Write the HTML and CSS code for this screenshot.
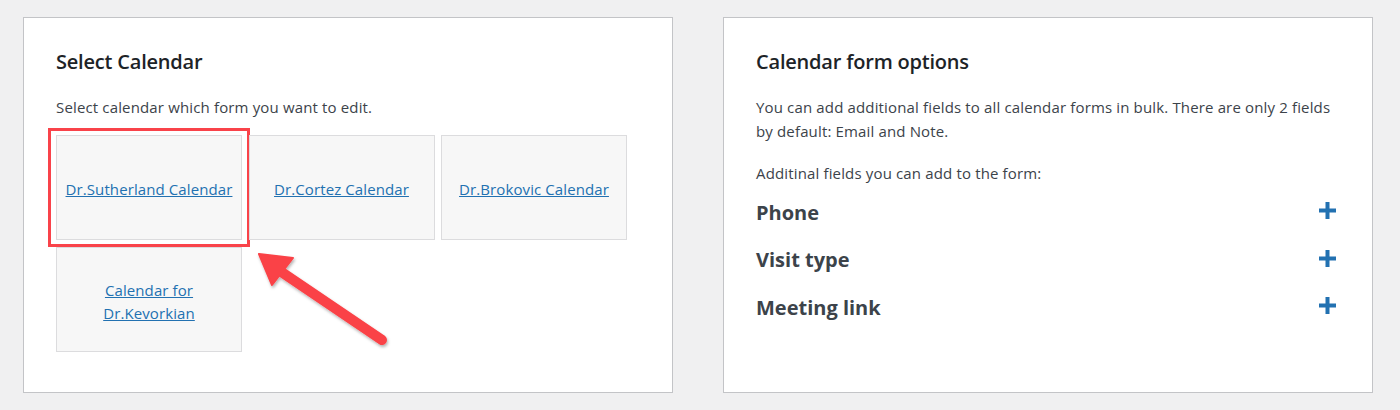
FILE: index.html
```html
<!DOCTYPE html>
<html lang="en">
<head>
    <meta charset="UTF-8">
    <title>Calendar Forms</title>
    <link rel="stylesheet" href="styles.css">
</head>
<body>

<div class="wrap">
    <!-- Left card: pick a calendar -->
    <div class="card card-calendars">
        <h2>Select Calendar</h2>
        <p class="intro">Select calendar which form you want to edit.</p>
        <div class="tiles">
            <div class="tile tile-active">
                <a href="#">Dr.Sutherland Calendar</a>
                <span class="highlight"></span>
            </div>
            <div class="tile"><a href="#">Dr.Cortez Calendar</a></div>
            <div class="tile"><a href="#">Dr.Brokovic Calendar</a></div>
            <div class="tile"><a href="#">Calendar for Dr.Kevorkian</a></div>
        </div>

        <!-- annotation arrow -->
        <svg class="pointer" width="170" height="130" viewBox="0 0 170 130">
            <defs>
                <filter id="shade" x="-20%" y="-20%" width="140%" height="140%">
                    <feDropShadow dx="1" dy="2" stdDeviation="1.5" flood-color="#000" flood-opacity="0.3"/>
                </filter>
            </defs>
            <g filter="url(#shade)" fill="#fa4246" stroke="#fa4246">
                <line x1="50" y1="36" x2="152" y2="105" stroke-width="10" stroke-linecap="round"/>
                <polygon points="29,19 63,23 42,50" stroke-width="2" stroke-linejoin="round"/>
            </g>
        </svg>
    </div>

    <!-- Right card: extra fields -->
    <div class="card card-options">
        <h2>Calendar form options</h2>
        <p class="intro">You can add additional fields to all calendar forms in bulk. There are only 2 fields by default: Email and Note.</p>
        <p class="intro small-gap">Additinal fields you can add to the form:</p>
        <ul class="fields">
            <li>
                <span>Phone</span>
                <svg class="plus" width="17" height="17" viewBox="0 0 17 17"><path d="M6.5 0h4v6.5H17v4h-6.5V17h-4v-6.5H0v-4h6.5z"/></svg>
            </li>
            <li>
                <span>Visit type</span>
                <svg class="plus" width="17" height="17" viewBox="0 0 17 17"><path d="M6.5 0h4v6.5H17v4h-6.5V17h-4v-6.5H0v-4h6.5z"/></svg>
            </li>
            <li>
                <span>Meeting link</span>
                <svg class="plus" width="17" height="17" viewBox="0 0 17 17"><path d="M6.5 0h4v6.5H17v4h-6.5V17h-4v-6.5H0v-4h6.5z"/></svg>
            </li>
        </ul>
    </div>
</div>

</body>
</html>
```

FILE: styles.css
```css
body {
    margin: 0;
    background-color: #f0f0f1;
    font-family: "Open Sans", "Noto Sans", Arial, sans-serif;
    color: #3c434a;
}
.wrap {
    display: flex;
    gap: 50px;
    padding: 17px 0 0 23px;
}
.card {
    position: relative;
    width: 650px;
    height: 376px;
    box-sizing: border-box;
    background: #fff;
    border: 1px solid #c3c4c7;
    padding: 30px 32px;
}
h2 {
    margin: 0;
    font-size: 20px;
    line-height: 28px;
    font-weight: 600;
    color: #1d2327;
    letter-spacing: -0.2px;
}
.intro {
    margin: 19px 0 0;
    font-size: 15px;
    line-height: 24px;
    letter-spacing: 0.15px;
}
.small-gap {
    margin-top: 18px;
}
/* Calendar tiles */
.tiles {
    display: grid;
    grid-template-columns: repeat(3, 186px);
    column-gap: 6.5px;
    row-gap: 7px;
    margin-top: 16px;
}
.tile {
    position: relative;
    height: 105px;
    box-sizing: border-box;
    background: #f7f7f7;
    border: 1px solid #dcdcde;
    display: flex;
    align-items: center;
    justify-content: center;
    text-align: center;
    padding: 0 6px;
}
.tile a {
    color: #2271b1;
    font-size: 15px;
    line-height: 23px;
    letter-spacing: 0.1px;
    margin-top: 4px;
}
.highlight {
    position: absolute;
    top: -8px;
    bottom: -8px;
    left: -9px;
    right: -9px;
    border: 3px solid #f9434a;
}
.pointer {
    position: absolute;
    left: 206px;
    top: 217px;
}
/* Field list */
.fields {
    list-style: none;
    margin: 13px 0 0;
    padding: 0;
}
.fields li {
    display: flex;
    align-items: center;
    justify-content: space-between;
    height: 28px;
    margin-bottom: 19.5px;
    font-size: 20px;
    font-weight: 700;
    color: #3c434a;
}
.plus {
    fill: #2271b1;
    margin-right: 4px;
    margin-top: -3px;
}
```
